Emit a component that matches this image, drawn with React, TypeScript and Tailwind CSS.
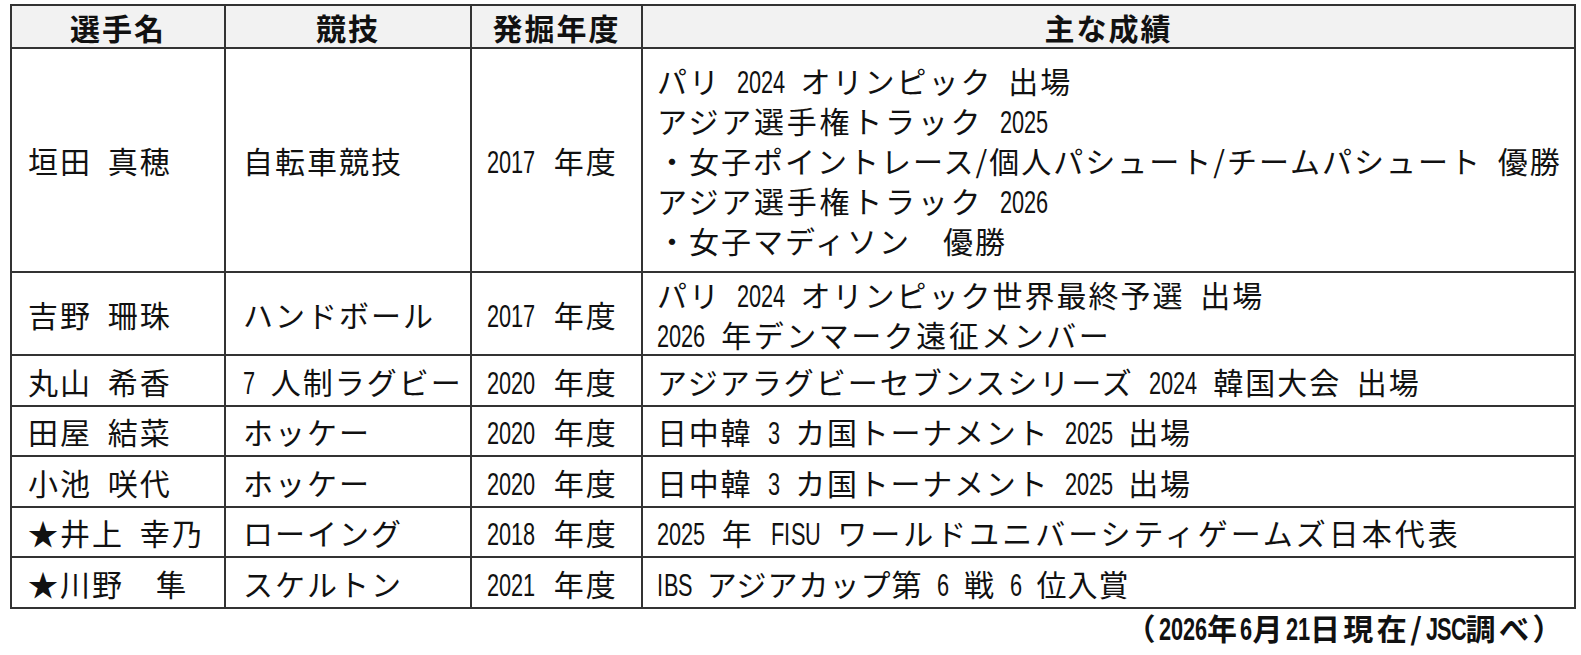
import React from "react";

type Line = { t: string; c?: string };

type Row = {
  name: string;
  sport: string;
  year: string;
  results: Line[];
  h: string;
};

const rows: Row[] = [
  {
    name: "垣田 真穂",
    sport: "自転車競技",
    year: "2017 年度",
    results: [
      { t: "パリ 2024 オリンピック 出場" },
      { t: "アジア選手権トラック 2025", c: "tracking-[2.75px]" },
      { t: "・女子ポイントレース/個人パシュート/チームパシュート 優勝" },
      { t: "アジア選手権トラック 2026", c: "tracking-[2.75px]" },
      { t: "・女子マディソン　優勝" },
    ],
    h: "h-[224px]",
  },
  {
    name: "吉野 珊珠",
    sport: "ハンドボール",
    year: "2017 年度",
    results: [
      { t: "パリ 2024 オリンピック世界最終予選 出場" },
      { t: "2026 年デンマーク遠征メンバー", c: "tracking-[2.5px]" },
    ],
    h: "h-[83px]",
  },
  {
    name: "丸山 希香",
    sport: "7 人制ラグビー",
    year: "2020 年度",
    results: [{ t: "アジアラグビーセブンスシリーズ 2024 韓国大会 出場" }],
    h: "h-[51px]",
  },
  {
    name: "田屋 結菜",
    sport: "ホッケー",
    year: "2020 年度",
    results: [{ t: "日中韓 3 カ国トーナメント 2025 出場", c: "tracking-[1.75px]" }],
    h: "h-[50px]",
  },
  {
    name: "小池 咲代",
    sport: "ホッケー",
    year: "2020 年度",
    results: [{ t: "日中韓 3 カ国トーナメント 2025 出場", c: "tracking-[1.75px]" }],
    h: "h-[51px]",
  },
  {
    name: "★井上 幸乃",
    sport: "ローイング",
    year: "2018 年度",
    results: [{ t: "2025 年 FISU ワールドユニバーシティゲームズ日本代表", c: "tracking-[3px]" }],
    h: "h-[50px]",
  },
  {
    name: "★川野　隼",
    sport: "スケルトン",
    year: "2021 年度",
    results: [{ t: "IBS アジアカップ第 6 戦 6 位入賞", c: "tracking-[1px]" }],
    h: "h-[51px]",
  },
];

// the source font has condensed half-width glyphs: squeeze each latin char
const boxW: Record<string, string> = {
  I: "w-[7px]",
  J: "w-[11px]",
  F: "w-[13px]",
  S: "w-[14px]",
  B: "w-[14px]",
  U: "w-[15px]",
  C: "w-[15px]",
};

const Narrow = ({ c }: { c: string }) => (
  <span className={`inline-block leading-none ${boxW[c] ?? "w-[12px]"}`}>
    <span className="inline-block origin-left scale-x-[0.68] font-['Liberation_Sans',sans-serif] text-[32px] leading-none tracking-normal">
      {c}
    </span>
  </span>
);

const Txt = ({ s }: { s: string }) => (
  <>
    {s.split(/([0-9A-Za-z]+)/).map((part, i) =>
      i % 2 === 1 ? (
        <span key={i} className="whitespace-nowrap">
          {part.split("").map((c, j) => (
            <Narrow key={j} c={c} />
          ))}
        </span>
      ) : (
        part
      )
    )}
  </>
);

const headers = ["選手名", "競技", "発掘年度", "主な成績"];

export default function App() {
  return (
    <div className="min-h-[655px] w-[1581px] bg-white pl-[10px] pt-[4px] font-['Noto_Sans_CJK_JP',sans-serif] text-[30px] leading-[40px] tracking-[2px] text-[#111] [word-spacing:7px]">
      <table className="w-[1566px] table-fixed border-collapse">
        <colgroup>
          <col className="w-[214px]" />
          <col className="w-[246px]" />
          <col className="w-[171px]" />
          <col />
        </colgroup>
        <thead>
          <tr className="h-[43px] bg-[#f2f2f2]">
            {headers.map((h) => (
              <th
                key={h}
                className="border-2 border-[#333] p-0 text-center align-middle font-bold"
              >
                {h}
              </th>
            ))}
          </tr>
        </thead>
        <tbody>
          {rows.map((r) => (
            <tr key={r.name} className={r.h}>
              <td className="border-2 border-[#333] py-0 pl-[16px] align-middle whitespace-nowrap">
                <Txt s={r.name} />
              </td>
              <td className="border-2 border-[#333] py-0 pl-[17px] align-middle whitespace-nowrap">
                <Txt s={r.sport} />
              </td>
              <td className="border-2 border-[#333] py-0 pl-[15px] align-middle whitespace-nowrap [word-spacing:10px]">
                <Txt s={r.year} />
              </td>
              <td className="border-2 border-[#333] py-0 pl-[14px] align-middle whitespace-nowrap">
                {r.results.map((line) => (
                  <div key={line.t} className={line.c}>
                    <Txt s={line.t} />
                  </div>
                ))}
              </td>
            </tr>
          ))}
        </tbody>
      </table>
      <div className="-mt-[2px] w-[1566px] pr-[10px] text-right font-bold tracking-[3.5px] [word-spacing:0px]">
        <Txt s="（2026年6月21日現在/JSC調べ）" />
      </div>
    </div>
  );
}
